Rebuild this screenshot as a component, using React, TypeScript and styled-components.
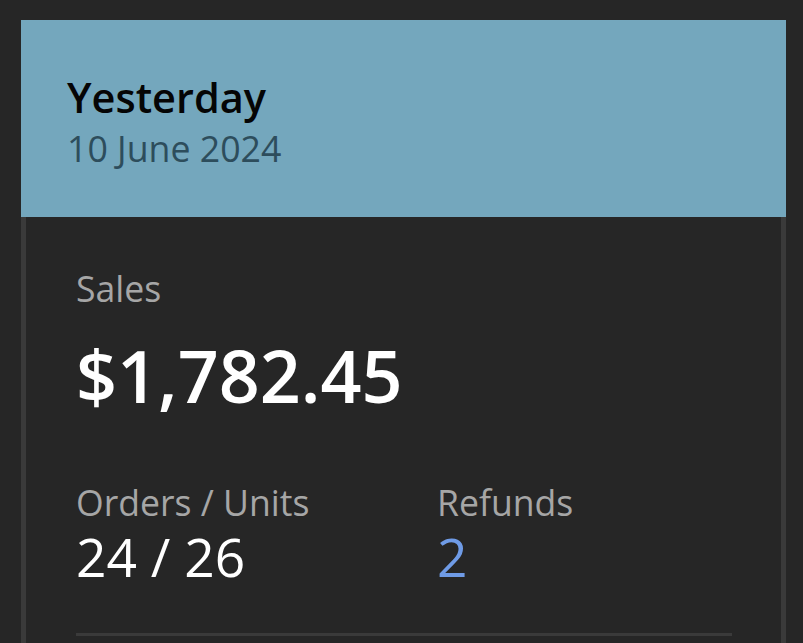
import React from "react";
import styled, { createGlobalStyle } from "styled-components";

const GlobalStyle = createGlobalStyle`
  html, body {
    margin: 0;
    padding: 0;
    background: #262626;
    overflow: hidden;
  }
  body {
    font-family: "Open Sans", "Noto Sans", sans-serif;
  }
`;

const Page = styled.div`
  padding: 20px 17px 0 21px;
  height: 643px;
  box-sizing: border-box;
`;

const Card = styled.section`
  display: flex;
  flex-direction: column;
  width: 765px;
`;

const Header = styled.header`
  height: 197px;
  box-sizing: border-box;
  background: #74a7bd;
  padding: 53px 46px 0;
  display: flex;
  flex-direction: column;
`;

const Title = styled.h1`
  margin: 0;
  font-size: 41.5px;
  line-height: 48px;
  font-weight: 600;
  color: #050505;
`;

const DateText = styled.div`
  margin-top: 6px;
  font-size: 35.7px;
  line-height: 42px;
  color: #2d4d5c;
`;

const Body = styled.div`
  border-left: 5px solid #3a3a3a;
  border-right: 5px solid #3a3a3a;
  padding: 50px 49px 80px 50px;
  display: flex;
  flex-direction: column;
`;

const Label = styled.div`
  font-size: 35.6px;
  line-height: 42px;
  color: #a6a6a6;
`;

const Amount = styled.div`
  margin-top: 24px;
  font-size: 71.8px;
  line-height: 84px;
  font-weight: 600;
  color: #ffffff;
`;

const Stats = styled.div`
  margin-top: 64px;
  display: grid;
  grid-template-columns: 361px 1fr;
`;

const Stat = styled.div`
  display: flex;
  flex-direction: column;
  gap: 3px;
`;

const Value = styled.div<{ $accent?: boolean }>`
  font-size: 53.3px;
  line-height: 62px;
  color: ${(p) => (p.$accent ? "#6f9be6" : "#ffffff")};
`;

const Divider = styled.hr`
  margin: 45px 0 0;
  border: none;
  height: 3px;
  background: #3a3a3a;
`;

export default function App() {
  return (
    <>
      <GlobalStyle />
      <Page>
        <Card>
          <Header>
            <Title>Yesterday</Title>
            <DateText>10 June 2024</DateText>
          </Header>
          <Body>
            <Label>Sales</Label>
            <Amount>$1,782.45</Amount>
            <Stats>
              <Stat>
                <Label>Orders / Units</Label>
                <Value>24 / 26</Value>
              </Stat>
              <Stat>
                <Label>Refunds</Label>
                <Value $accent>2</Value>
              </Stat>
            </Stats>
            <Divider />
          </Body>
        </Card>
      </Page>
    </>
  );
}
